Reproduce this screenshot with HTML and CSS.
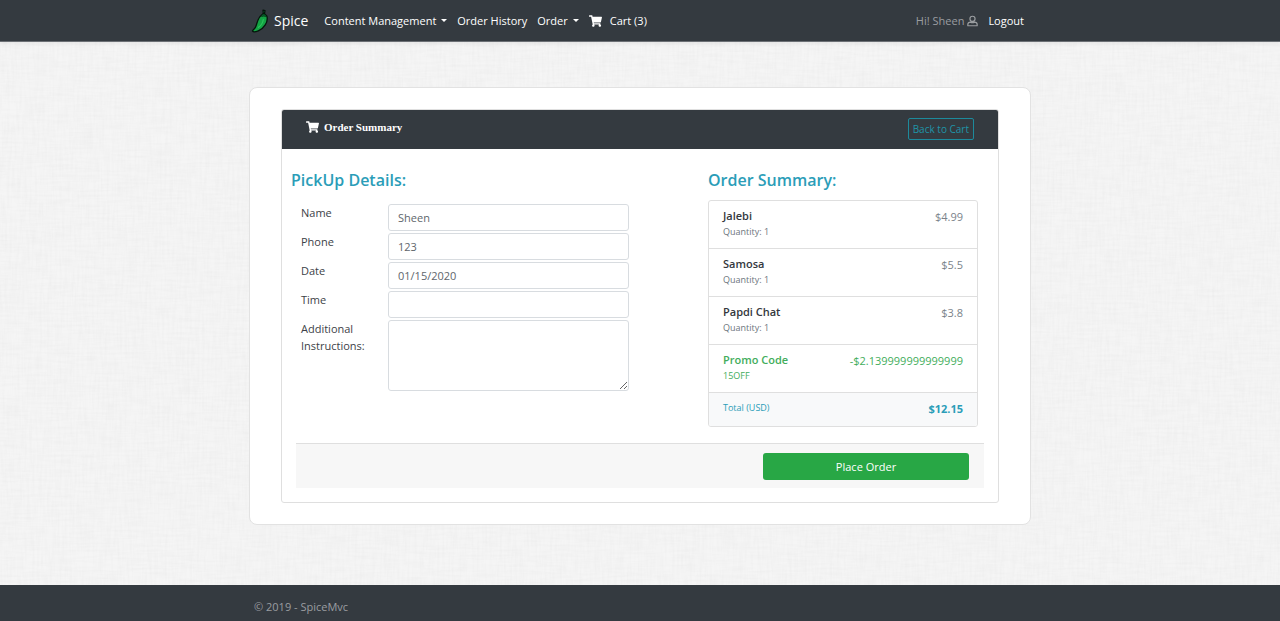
FILE: index.html
```html
<!DOCTYPE html>
<html lang="en">
<head>
<meta charset="utf-8">
<meta name="viewport" content="width=device-width, initial-scale=1">
<title>Order Summary - SpiceMvc</title>
<link rel="stylesheet" href="styles.css">
</head>
<body class="page">
<svg class="linen" aria-hidden="true">
  <filter id="weft" x="0" y="0" width="100%" height="100%">
    <feTurbulence type="fractalNoise" baseFrequency="0.04 0.4" numOctaves="2" seed="4"/>
    <feColorMatrix values="0 0 0 0 0.4  0 0 0 0 0.4  0 0 0 0 0.4  0.1 0 0 0 -0.035"/>
  </filter>
  <filter id="warp" x="0" y="0" width="100%" height="100%">
    <feTurbulence type="fractalNoise" baseFrequency="0.4 0.04" numOctaves="2" seed="9"/>
    <feColorMatrix values="0 0 0 0 0.4  0 0 0 0 0.4  0 0 0 0 0.4  0.1 0 0 0 -0.035"/>
  </filter>
  <rect width="100%" height="100%" filter="url(#weft)"/>
  <rect width="100%" height="100%" filter="url(#warp)"/>
</svg>
<svg class="symbols" aria-hidden="true">
  <symbol id="cart" viewBox="0 0 576 512"><path fill="currentColor" d="M528 301l47-208c4-15-8-29-23-29H159l-9-45C148 8 138 0 127 0H24C11 0 0 11 0 24v16c0 13 11 24 24 24h70l70 343c-17 10-28 28-28 49 0 31 25 56 56 56s56-25 56-56c0-16-6-30-17-40h210c-11 10-17 24-17 40 0 31 25 56 56 56s56-25 56-56c0-22-13-41-32-50l6-25c3-15-8-29-24-29H218l-7-32h294c11 0 21-8 23-19z"/></symbol>
</svg>

<header class="navbar">
  <div class="container nav-row">
    <a class="brand" href="#">
      <svg class="chili" viewBox="0 0 18 24" aria-hidden="true">
        <path d="M12 1.200l2 .5-.5 3 2.300 2.200c2 6-3.300 13-8.500 15-2.500 1-5 1.300-5.800.3-.5-.8 2.300-2 3.200-4.500C6.200 14 7 8.500 10.200 6.500L12.300 4.500z" fill="#14a344" stroke="#05150b" stroke-width="1.300" stroke-linejoin="round"/>
        <path d="M10 6.900c.8-1.200 1.800-1.800 2.500-1.900 1.300.1 2.500 1 3 2.300-1.200.5-2 .1-2.700-.2-.9.500-1.900.5-2.800-.2z" fill="#07602b" stroke="#05150b" stroke-width=".5"/>
        <path d="M12.300 10.500c-.5 3.500-2.300 6-4.800 7.800" fill="none" stroke="#2cc45c" stroke-width="1.200" stroke-linecap="round"/>
      </svg>
      <span>Spice</span>
    </a>
    <nav class="menu" aria-label="Main">
      <a class="nav-link caret" href="#">Content Management</a>
      <a class="nav-link" href="#">Order History</a>
      <a class="nav-link caret" href="#">Order</a>
      <a class="nav-link cart-link" href="#"><svg class="cart-icon" aria-hidden="true"><use href="#cart"/></svg>Cart (3)</a>
    </nav>
    <div class="account">
      <a class="nav-link muted" href="#">Hi! Sheen
        <svg class="user-icon" viewBox="0 0 12 12" aria-hidden="true"><path d="M6 .8a2.800 2.800 0 1 1 0 5.600A2.800 2.800 0 0 1 6 .8zM3.800 7.200C2 7.300.9 8.300.9 9.900v1.300h10.200V9.900c0-1.600-1.100-2.600-2.900-2.700-1.300.6-3.100.6-4.400 0z" fill="none" stroke="currentColor" stroke-width="1.300" stroke-linejoin="round"/></svg>
      </a>
      <a class="nav-link" href="#">Logout</a>
    </div>
  </div>
</header>

<main class="container main">
  <form class="sheet">
    <section class="card">
      <header class="card-header">
        <h1 class="card-title"><svg class="cart-icon" aria-hidden="true"><use href="#cart"/></svg>Order Summary</h1>
        <a class="btn-outline" href="#">Back to Cart</a>
      </header>
      <div class="card-body">
        <div class="columns">
          <section class="pickup">
            <h2 class="heading">PickUp Details:</h2>
            <div class="fields">
              <label for="name">Name</label><input id="name" class="control" type="text" value="Sheen">
              <label for="phone">Phone</label><input id="phone" class="control" type="text" value="123">
              <label for="date">Date</label><input id="date" class="control" type="text" value="01/15/2020">
              <label for="time">Time</label><input id="time" class="control" type="text">
              <label for="notes">Additional Instructions:</label><textarea id="notes" class="control notes"></textarea>
            </div>
          </section>
          <section class="summary">
            <h2 class="heading">Order Summary:</h2>
            <ul class="items">
              <li class="item"><div><h3 class="item-name">Jalebi</h3><small class="note">Quantity: 1</small></div><span class="price">$4.99</span></li>
              <li class="item"><div><h3 class="item-name">Samosa</h3><small class="note">Quantity: 1</small></div><span class="price">$5.5</span></li>
              <li class="item"><div><h3 class="item-name">Papdi Chat</h3><small class="note">Quantity: 1</small></div><span class="price">$3.8</span></li>
              <li class="item promo"><div><h3 class="item-name">Promo Code</h3><small class="note">15OFF</small></div><span class="price">-$2.139999999999999</span></li>
              <li class="item total"><small class="note">Total (USD)</small><strong class="price">$12.15</strong></li>
            </ul>
          </section>
        </div>
        <footer class="card-footer"><button class="btn-success" type="submit">Place Order</button></footer>
      </div>
    </section>
  </form>
</main>

<footer class="site-footer"><div class="container footer-row">© 2019 - SpiceMvc</div></footer>
</body>
</html>
```

FILE: styles.css
```css
*, *::before, *::after { box-sizing: border-box; }

.page {
  margin: 0;
  min-height: 100vh;
  display: flex;
  flex-direction: column;
  position: relative;
  background: #f5f5f5;
  color: #3d4247;
  font: 11px/17px "Open Sans", "Noto Sans", sans-serif;
}

.linen {
  position: absolute;
  inset: 0;
  width: 100%;
  height: 100%;
  z-index: -1;
}

.symbols { position: absolute; width: 0; height: 0; }

.container { width: 100%; max-width: 782px; margin: 0 auto; }

a { color: inherit; text-decoration: none; }

/* Navigation */
.navbar {
  background: #343a40;
  color: #fff;
  border-bottom: 1px solid #6c7075;
  box-shadow: 0 2px 4px rgba(0, 0, 0, .06);
}
.nav-row { display: flex; align-items: center; min-height: 41px; padding: 0 7px 0 2px; }
.brand { display: flex; align-items: center; gap: 5px; margin-right: 16px; font-size: 14px; line-height: 20px; }
.chili { width: 18px; height: 24px; }
.menu, .account { display: flex; align-items: center; gap: 10px; }
.nav-link { display: flex; align-items: center; gap: 3px; }
.account { margin-left: auto; }
.caret::after {
  content: "";
  margin-left: 2px;
  border: 3px solid transparent;
  border-top-color: currentColor;
  border-bottom: 0;
}
.cart-link { gap: 8px; }
.cart-icon { width: 13px; height: 12px; }
.user-icon { width: 11px; height: 12px; }
.muted { color: #9a9da0; }

/* Order card */
.main { flex: 1; padding: 45px 0 60px; }
.sheet { padding: 21px 31px; background: #fff; border: 1px solid #e2e2e2; border-radius: 8px; }
.card { border: 1px solid #dfdfdf; border-radius: 3px; overflow: hidden; }
.card-header {
  display: flex;
  justify-content: space-between;
  align-items: flex-start;
  padding: 8px 24px 9px;
  background: #343a40;
  color: #fff;
}
.card-title {
  display: flex;
  align-items: center;
  gap: 5px;
  margin: 0;
  font: bold 11px/18px "Liberation Serif", serif;
}
.btn-outline {
  padding: 2px 4px;
  border: 1px solid #1d8a9c;
  border-radius: 2px;
  color: #1f94a8;
  font-size: 10px;
  line-height: 16px;
}
.card-body { padding: 20px 14px 14px; }
.columns { display: grid; grid-template-columns: 338px 270px; justify-content: space-between; padding-right: 6px; margin-left: -5px; }
.heading { margin: 0 0 9px; color: #2b9db8; font-size: 16px; line-height: 22px; font-weight: 600; }
.fields { display: grid; grid-template-columns: 76px 1fr; gap: 2px 11px; padding: 4px 0 0 10px; }
.control {
  width: 100%;
  height: 27px;
  padding: 4px 9px;
  border: 1px solid #d8dce0;
  border-radius: 3px;
  background: #fff;
  color: #60666c;
  font: inherit;
}
.notes { height: 71px; resize: vertical; display: block; }

.items { margin: 0; padding: 0; list-style: none; border: 1px solid #dfdfdf; border-radius: 3px; overflow: hidden; }
.item { display: flex; justify-content: space-between; padding: 7px 14px 8px; }
.item + .item { border-top: 1px solid #dfdfdf; }
.item-name { margin: 0; color: #33383d; font-size: 11px; line-height: 16px; font-weight: 600; }
.note { display: block; color: #6c757d; font-size: 9px; line-height: 16px; }
.price { color: #7b838a; line-height: 18px; }
.promo .item-name, .promo .note, .promo .price { color: #42ad5b; }
.total { background: #f8f9fa; }
.total .note, .total .price { color: #2b9db8; }

.card-footer {
  display: flex;
  justify-content: flex-end;
  margin-top: 16px;
  padding: 9px 15px 8px;
  border-top: 1px solid #dfdfdf;
  background: #f7f7f7;
}
.btn-success {
  flex: 0 1 206px;
  padding: 5px 8px;
  border: 0;
  border-radius: 3px;
  background: #28a745;
  color: #fff;
  font: inherit;
}

/* Site footer */
.site-footer { background: #343a40; color: #9a9da0; }
.footer-row { padding: 13px 5px 6px; }
```
